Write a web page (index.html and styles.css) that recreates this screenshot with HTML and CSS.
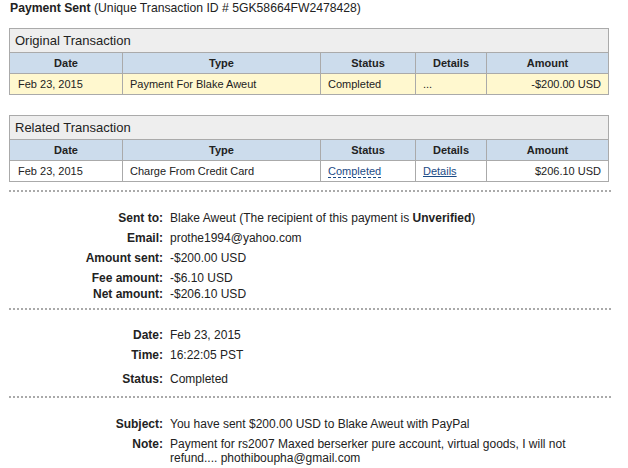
FILE: index.html
```html
<!DOCTYPE html>
<html lang="en">

<head>
    <meta charset="UTF-8">
    <title>Payment Sent</title>
    <link rel="stylesheet" href="styles.css">
</head>

<body>

    <div class="page">
        <h1 class="title"><b>Payment Sent</b> (Unique Transaction ID # 5GK58664FW2478428)</h1>

        <table class="txn txn-original">
            <tr>
                <th class="caption" colspan="5">Original Transaction</th>
            </tr>
            <tr class="head">
                <th class="c-date">Date</th>
                <th class="c-type">Type</th>
                <th class="c-status">Status</th>
                <th class="c-details">Details</th>
                <th class="c-amount">Amount</th>
            </tr>
            <tr class="row highlight">
                <td>Feb 23, 2015</td>
                <td>Payment For Blake Aweut</td>
                <td>Completed</td>
                <td>...</td>
                <td class="num">-$200.00 USD</td>
            </tr>
        </table>

        <table class="txn txn-related">
            <tr>
                <th class="caption" colspan="5">Related Transaction</th>
            </tr>
            <tr class="head">
                <th class="c-date">Date</th>
                <th class="c-type">Type</th>
                <th class="c-status">Status</th>
                <th class="c-details">Details</th>
                <th class="c-amount">Amount</th>
            </tr>
            <tr class="row">
                <td>Feb 23, 2015</td>
                <td>Charge From Credit Card</td>
                <td><a class="help-link" href="#">Completed</a></td>
                <td><a class="link" href="#">Details</a></td>
                <td class="num">$206.10 USD</td>
            </tr>
        </table>

        <hr class="dots">

        <div class="info info-amounts">
            <div class="info-row"><span class="label">Sent to:</span><span class="value">Blake Aweut (The recipient of this payment is <b>Unverified</b>)</span></div>
            <div class="info-row"><span class="label">Email:</span><span class="value">prothe1994@yahoo.com</span></div>
            <div class="info-row"><span class="label">Amount sent:</span><span class="value">-$200.00 USD</span></div>
            <div class="info-row"><span class="label">Fee amount:</span><span class="value">-$6.10 USD</span></div>
            <div class="info-row tight"><span class="label">Net amount:</span><span class="value">-$206.10 USD</span></div>
        </div>

        <hr class="dots">

        <div class="info info-when">
            <div class="info-row"><span class="label">Date:</span><span class="value">Feb 23, 2015</span></div>
            <div class="info-row"><span class="label">Time:</span><span class="value">16:22:05 PST</span></div>
            <div class="info-row loose"><span class="label">Status:</span><span class="value">Completed</span></div>
        </div>

        <hr class="dots">

        <div class="info">
            <div class="info-row"><span class="label">Subject:</span><span class="value">You have sent $200.00 USD to Blake Aweut with PayPal</span></div>
            <div class="info-row"><span class="label">Note:</span><span class="value">Payment for rs2007 Maxed berserker pure account, virtual goods, I will not refund.... phothiboupha@gmail.com</span></div>
            <div class="info-row tight"><span class="label">Funding Type:</span><span class="value">Credit Card</span></div>
        </div>
    </div>

</body>

</html>
```

FILE: styles.css
```css
body {
    margin: 0;
    padding: 0;
    background: #ffffff;
    font-family: 'Liberation Sans', Arial, sans-serif;
    color: #222;
}

.page {
    width: 600px;
    padding: 0 0 0 9px;
}

.title {
    margin: 0 0 12px 1px;
    font-size: 12.2px;
    font-weight: normal;
    line-height: 16px;
}

.title b {
    font-weight: bold;
}

.txn {
    width: 600px;
    border-collapse: collapse;
    font-size: 11px;
    margin-bottom: 20px;
}

.txn th,
.txn td {
    border: 1px solid #aaa;
    padding: 0 7px;
}

.txn td:first-child {
    padding-left: 8px;
}

.txn .caption {
    background: #eeeeee;
    text-align: left;
    font-size: 13px;
    font-weight: normal;
    height: 23px;
    padding-left: 5px;
}

.txn .head th {
    background: #ccdcec;
    height: 20px;
    font-weight: bold;
    text-align: center;
}

.txn .row td {
    height: 20px;
}

.txn .highlight td {
    background: #fff8cf;
}

.c-date { width: 98px; }
.c-type { width: 183px; }
.c-status { width: 80px; }
.c-details { width: 56px; }

.txn .num {
    text-align: right;
}

.txn-related {
    margin-bottom: 8px;
}

.help-link {
    color: #1c4b86;
    text-decoration: none;
    border-bottom: 1px dashed #1c4b86;
}

.link {
    color: #1c4b86;
}

.dots {
    border: none;
    border-top: 2px dotted #aaa;
    width: 602px;
    margin: 0;
    height: 0;
}

.info {
    padding: 19px 0 9px;
    font-size: 12px;
    line-height: 14px;
}

.info-amounts {
    padding: 19px 0 7px;
}

.info-when {
    padding: 18px 0 10px;
}

.info-row {
    display: grid;
    grid-template-columns: 154px 430px;
    column-gap: 7px;
    margin-top: 6px;
}

.info-row:first-child {
    margin-top: 0;
}

.info-row.tight {
    margin-top: 2px;
}

.info-row.loose {
    margin-top: 10px;
}

.label {
    text-align: right;
    font-weight: bold;
}
```
